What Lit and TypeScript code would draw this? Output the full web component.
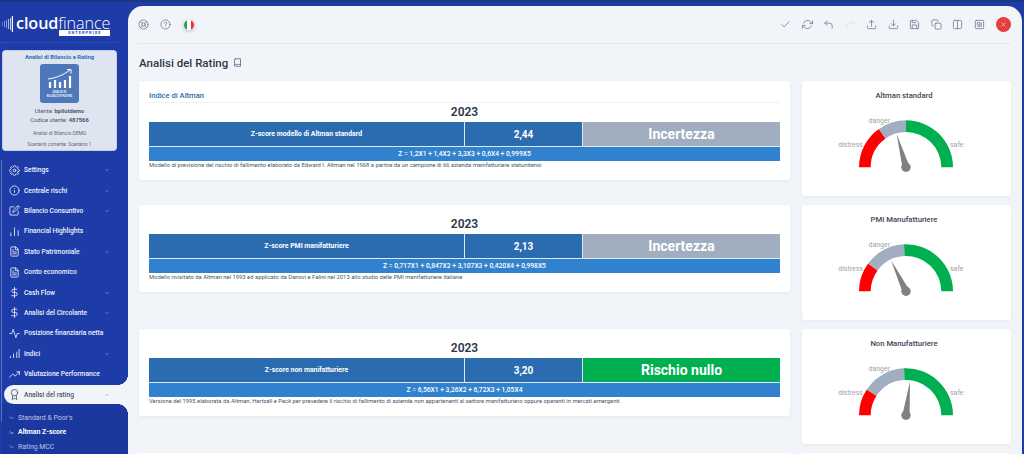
import { LitElement, html, css, svg } from "lit";
import { customElement } from "lit/decorators.js";

const ic = (body: any, cls = "ic") =>
  html`<svg class=${cls} viewBox="0 0 24 24" fill="none" stroke="currentColor" stroke-width="1.8" stroke-linecap="round" stroke-linejoin="round">${body}</svg>`;

const I: Record<string, any> = {
  settings: svg`<circle cx="12" cy="12" r="3"/><path d="M19.4 15a1.65 1.65 0 0 0 .33 1.82l.06.06a2 2 0 1 1-2.83 2.83l-.06-.06a1.65 1.65 0 0 0-2.82 1.17V21a2 2 0 1 1-4 0v-.09A1.65 1.65 0 0 0 7.2 19.7l-.06.06a2 2 0 1 1-2.83-2.83l.06-.06a1.65 1.65 0 0 0-1.17-2.82H3a2 2 0 1 1 0-4h.09A1.65 1.65 0 0 0 4.3 7.2l-.06-.06a2 2 0 1 1 2.83-2.83l.06.06A1.65 1.65 0 0 0 10 3.2V3a2 2 0 1 1 4 0v.09a1.65 1.65 0 0 0 2.8 1.17l.06-.06a2 2 0 1 1 2.83 2.83l-.06.06A1.65 1.65 0 0 0 20.8 10H21a2 2 0 1 1 0 4h-.09a1.65 1.65 0 0 0-1.51 1z"/>`,
  info: svg`<circle cx="12" cy="12" r="10"/><path d="M12 16v-4M12 8h.01"/>`,
  edit: svg`<path d="M11 4H4a2 2 0 0 0-2 2v14a2 2 0 0 0 2 2h14a2 2 0 0 0 2-2v-7"/><path d="M18.5 2.5a2.12 2.12 0 0 1 3 3L12 15l-4 1 1-4 9.5-9.5z"/>`,
  bars: svg`<path d="M4 21v-6M12 21V4M20 21v-11"/>`,
  file: svg`<path d="M14 2H6a2 2 0 0 0-2 2v16a2 2 0 0 0 2 2h12a2 2 0 0 0 2-2V8z"/><path d="M14 2v6h6M16 13H8M16 17H8M10 9H8"/>`,
  dollar: svg`<path d="M12 1v22M17 5H9.5a3.5 3.5 0 0 0 0 7h5a3.5 3.5 0 0 1 0 7H6"/>`,
  activity: svg`<path d="M22 12h-4l-3 9L9 3l-3 9H2"/>`,
  stats: svg`<path d="M3 21v-3M10 21v-8M17 21V9M22 21V3"/>`,
  trend: svg`<path d="M23 6l-9.5 9.5-5-5L1 18"/><path d="M17 6h6v6"/>`,
  award: svg`<circle cx="12" cy="8" r="7"/><path d="M8.2 14L7 23l5-3 5 3-1.2-9"/>`,
  down: svg`<path d="M6 9l6 6 6-6"/>`,
  up: svg`<path d="M18 15l-6-6-6 6"/>`,
  sub: svg`<path d="M5 5v8a2 2 0 0 0 2 2h12M15 11l4 4-4 4"/>`,
  buoy: svg`<circle cx="12" cy="12" r="10"/><circle cx="12" cy="12" r="4"/><path d="M4.9 4.9l4.3 4.3M14.8 14.8l4.3 4.3M14.8 9.2l4.3-4.3M4.9 19.1l4.3-4.3"/>`,
  help: svg`<circle cx="12" cy="12" r="10"/><path d="M9.1 9a3 3 0 0 1 5.8 1c0 2-3 3-3 3M12 17h.01"/>`,
  book: svg`<path d="M4 19.5A2.5 2.5 0 0 1 6.5 17H20"/><path d="M6.5 2H20v20H6.5A2.5 2.5 0 0 1 4 19.5v-15A2.5 2.5 0 0 1 6.5 2z"/>`,
  check: svg`<path d="M20 6L9 17l-5-5"/>`,
  refresh: svg`<path d="M23 4v6h-6M1 20v-6h6"/><path d="M3.5 9a9 9 0 0 1 14.9-3.4L23 10M1 14l4.6 4.4A9 9 0 0 0 20.5 15"/>`,
  undo: svg`<path d="M9 14L4 9l5-5"/><path d="M4 9h10a6 6 0 0 1 6 6v5"/>`,
  redo: svg`<path d="M15 14l5-5-5-5"/><path d="M20 9H10a6 6 0 0 0-6 6v5"/>`,
  upload: svg`<path d="M3 15v4a2 2 0 0 0 2 2h14a2 2 0 0 0 2-2v-4"/><path d="M17 8l-5-5-5 5M12 3v13"/>`,
  download: svg`<path d="M3 15v4a2 2 0 0 0 2 2h14a2 2 0 0 0 2-2v-4"/><path d="M7 10l5 5 5-5M12 15V3"/>`,
  save: svg`<path d="M19 21H5a2 2 0 0 1-2-2V5a2 2 0 0 1 2-2h11l5 5v11a2 2 0 0 1-2 2z"/><path d="M17 21v-8H7v8M7 3v5h8"/>`,
  copy: svg`<rect x="9" y="9" width="13" height="13" rx="2"/><path d="M5 15H4a2 2 0 0 1-2-2V4a2 2 0 0 1 2-2h9a2 2 0 0 1 2 2v1"/>`,
  columns: svg`<rect x="3" y="3" width="18" height="18" rx="3"/><path d="M12 3v18"/>`,
  layout: svg`<rect x="3" y="3" width="18" height="18" rx="2"/><path d="M8 8h5v5H8zM16 8v8H8"/>`,
  x: svg`<path d="M18 6L6 18M6 6l12 12"/>`,
};

const MENU = [
  ["settings", "Settings", true],
  ["info", "Centrale rischi", true],
  ["edit", "Bilancio Consuntivo", true],
  ["bars", "Financial Highlights", false],
  ["file", "Stato Patrimoniale", true],
  ["file", "Conto economico", false],
  ["dollar", "Cash Flow", true],
  ["dollar", "Analisi del Circolante", true],
  ["activity", "Posizione finanziaria netta", false],
  ["stats", "Indici", true],
  ["trend", "Valutazione Performance", false],
];

const RATINGS = [
  {
    head: true,
    label: "Z-score modello di Altman standard",
    value: "2,44",
    result: "Incertezza",
    ok: false,
    formula: "Z = 1,2X1 + 1,4X2 + 3,3X3 + 0,6X4 + 0,999X5",
    desc: "Modello di previsione del rischio di fallimento elaborato da Edward I. Altman nel 1968 a partire da un campione di 66 azienda manifatturiere statunitensi",
    gauge: { title: "Altman standard", red: 54.7, grey: 90, tx: -9.3, ty: -33 },
  },
  {
    head: false,
    label: "Z-score PMI manifatturiere",
    value: "2,13",
    result: "Incertezza",
    ok: false,
    formula: "Z = 0,717X1 + 0,847X2 + 3,107X3 + 0,420X4 + 0,998X5",
    desc: "Modello rivisitato da Altman nel 1993 ed applicato da Danovi e Falini nel 2013 allo studio delle PMI manifatturiere italiane",
    gauge: { title: "PMI Manufatturiere", red: 36.3, grey: 87.6, tx: -15, ty: -31 },
  },
  {
    head: false,
    label: "Z-score non manifatturiere",
    value: "3,20",
    result: "Rischio nullo",
    ok: true,
    formula: "Z = 6,56X1 + 3,26X2 + 6,72X3 + 1,05X4",
    desc: "Versione del 1995 elaborata da Altman, Hartzell e Peck per prevedere il rischio di fallimento di aziende non appartenenti al settore manifatturiero oppure operanti in mercati emergenti",
    gauge: { title: "Non Manufatturiere", red: 33.4, grey: 87.6, tx: 4, ty: -34 },
  },
];

const CX = 104;
const CY = 56.3;
const RO = 47;
const RI = 35.3;
function seg(a: number, b: number) {
  const p = (r: number, d: number) => {
    const t = (d * Math.PI) / 180;
    return `${(CX - r * Math.cos(t)).toFixed(2)} ${(CY - r * Math.sin(t)).toFixed(2)}`;
  };
  return `M${p(RO, a)} A${RO} ${RO} 0 0 1 ${p(RO, b)} L${p(RI, b)} A${RI} ${RI} 0 0 0 ${p(RI, a)} Z`;
}

function gauge(g: { red: number; grey: number; tx: number; ty: number }) {
  const len = Math.hypot(g.tx, g.ty);
  const nx = (-g.ty / len) * 3.6;
  const ny = (g.tx / len) * 3.6;
  return html`<svg class="gauge" viewBox="0 0 209 85" width="209" height="85">
    <path d=${seg(0, g.red)} fill="#ff0000"/>
    <path d=${seg(g.red, g.grey)} fill="#a0aec0"/>
    <path d=${seg(g.grey, 180)} fill="#00b050"/>
    <text x="61" y="35.6" text-anchor="end">distress</text>
    <text x="66.5" y="11.5">danger</text>
    <text x="148" y="35.6">safe</text>
    <path d="M${CX + g.tx} ${CY + g.ty} L${CX + nx} ${CY + ny} L${CX - nx} ${CY - ny} Z" fill="#808185"/>
    <circle cx=${CX} cy=${CY} r="4.7" fill="#808185"/>
  </svg>`;
}

@customElement("app-root")
export class AppRoot extends LitElement {
  static styles = css`
    :host {
      display: block;
      height: 100vh;
      overflow: hidden;
      font-family: Roboto, "Liberation Sans", sans-serif;
    }
    .page {
      display: flex;
      height: 100%;
      background: linear-gradient(#1c3585 0 2px, #1d3ca8 2px);
      color: #2d3748;
    }
    .ic { display: block; width: 11px; height: 11px; flex: none; }

    /* sidebar */
    .side { width: 128px; flex: none; display: flex; flex-direction: column; color: #fff; }
    .brand {
      height: 43px;
      flex: none;
      margin-right: 10px;
      border-bottom: 1px dotted rgba(255,255,255,.15);
      display: flex;
      align-items: flex-start;
      padding: 16px 0 0 2px;
      box-sizing: border-box;
      gap: 3px;
    }
    .wave { width: 11px; height: 16px; flex: none; }
    .brandtxt { display: flex; flex-direction: column; align-items: flex-end; }
    .word { font-family: "Open Sans", sans-serif; font-size: 16.2px; line-height: 14px; letter-spacing: -.1px; white-space: nowrap; }
    .word b { font-weight: 600; }
    .word span { font-weight: 300; }
    .ent {
      background: #fff;
      color: #2b50b8;
      font-size: 4px;
      font-weight: 700;
      line-height: 5.6px;
      width: 51px;
      text-align: center;
      letter-spacing: 1px;
    }
    .ucard {
      margin: 7px 11px 0 2px;
      height: 101px;
      box-sizing: border-box;
      flex: none;
      background: #dfe5f0;
      border: 1px dotted #a9b9dc;
      border-radius: 4px;
      color: #4a5568;
      display: flex;
      flex-direction: column;
      align-items: center;
      padding-top: 3px;
      font-size: 5.8px;
    }
    .ucard h4 { margin: 0; font-size: 5.8px; line-height: 7px; color: #2b6cb0; font-weight: 700; }
    .tile {
      width: 39px;
      height: 39px;
      margin-top: 3px;
      background: #4f78bb;
      border-radius: 3px;
      display: flex;
      flex-direction: column;
      align-items: center;
      color: #fff;
      flex: none;
    }
    .tile svg { width: 26px; height: 21px; margin-top: 4px; }
    .tile span { font-size: 2.8px; line-height: 3.6px; text-align: center; width: 26px; margin-top: 2px; font-weight: 500; }
    .u1 { margin-top: 4px; line-height: 9px; text-align: center; }
    .ucard b { font-weight: 700; color: #4a5568; }
    .u2 { margin-top: 5px; font-size: 4.9px; line-height: 6px; color: #5a6678; }
    .u3 { margin-top: 5px; font-size: 4.9px; line-height: 6px; color: #5a6678; }

    .menu {
      margin: 9px 0 0 1px;
      border-left: 1px solid rgba(255,255,255,.28);
      display: flex;
      flex-direction: column;
      height: 262px;
      flex: none;
    }
    .item {
      height: 20.4px;
      flex: none;
      display: flex;
      align-items: center;
      padding-left: 7px;
      font-size: 6.7px;
      font-weight: 500;
      color: #eef2fb;
      white-space: nowrap;
    }
    .item .label { margin-left: 4px; flex: 1; }
    .item .ch { width: 6px; height: 6px; margin-right: 18px; opacity: .7; }
    .item.on {
      position: relative;
      margin-left: 2px;
      padding-left: 5px;
      height: 18.6px;
      margin-top: 1px;
      background: #f1f5f9;
      color: #4a5568;
      border-radius: 10px 0 0 10px;
    }
    .item.on::before, .item.on::after {
      content: "";
      position: absolute;
      right: 0;
      width: 10px;
      height: 10px;
    }
    .item.on::before { top: -10px; background: radial-gradient(circle at 0 0, transparent 9.6px, #f1f5f9 10px); }
    .item.on::after { bottom: -10px; background: radial-gradient(circle at 0 100%, transparent 9.6px, #f1f5f9 10px); }
    .subs {
      background: #1b389f;
      padding-top: 6.4px;
      display: flex;
      flex-direction: column;
      font-size: 6.9px;
      color: #b9c6e6;
      height: 60px;
      box-sizing: border-box;
    }
    .sub { height: 14.5px; flex: none; display: flex; align-items: center; padding-left: 7px; gap: 4px; white-space: nowrap; }
    .sub svg { width: 5px; height: 5px; }
    .sub.on { color: #fff; font-weight: 700; }

    /* main */
    .panel {
      flex: 1;
      min-width: 0;
      margin: 6px 2px 0 0;
      background: #f1f5f9;
      border-radius: 15px 15px 0 0;
      padding: 0 11px 0 10px;
      overflow: hidden;
    }
    .bar {
      height: 37px;
      border-bottom: 1px solid #e2e8f0;
      display: flex;
      align-items: center;
      color: #718096;
    }
    .tools { display: flex; align-items: center; gap: 10.5px; }
    .flag {
      width: 10px;
      height: 10px;
      border-radius: 50%;
      overflow: hidden;
      display: flex;
      margin-left: 3px;
      box-shadow: 0 1px 4px rgba(0,0,0,.25);
      flex: none;
    }
    .flag i { flex: 1; }
    .g { background: #1fa94f; }
    .w { background: #fff; }
    .r { background: #ee2a35; }
    .spacer { flex: 1; }
    .off { color: #dde5ef; }
    .close {
      width: 15px;
      height: 15px;
      margin-left: 1px;
      border-radius: 50%;
      background: #e53e3e;
      color: #fff;
      display: flex;
      align-items: center;
      justify-content: center;
    }
    .close svg { width: 7px; height: 7px; }
    .title {
      height: 37px;
      display: flex;
      align-items: center;
      gap: 5px;
      margin-left: 1px;
      font-size: 11.5px;
      font-weight: 500;
      color: #2d3748;
    }
    .title svg { width: 9px; height: 9px; color: #4a5568; }
    .grid {
      display: grid;
      grid-template-columns: 651px 209px;
      column-gap: 12px;
      row-gap: 9px;
      grid-auto-rows: 115px;
      margin-left: 1px;
    }
    .card {
      background: #fff;
      border-radius: 3px;
      box-shadow: 0 1px 4px rgba(45,55,72,.06);
    }
    .rate { align-self: start; padding: 10px 10px 9.6px; }
    .rate h5 {
      margin: 0;
      font-size: 7.6px;
      line-height: 10px;
      font-weight: 500;
      color: #2b6cb0;
      border-bottom: 1px solid #edf2f7;
      padding-bottom: 1px;
    }
    .year { text-align: center; font-size: 12px; font-weight: 600; line-height: 19px; color: #2d3748; }
    .tbl {
      display: grid;
      grid-template-columns: 316px 118px 197px;
      color: #fff;
      row-gap: 1px;
      background: #e2e8f0;
    }
    .tbl > div { display: flex; align-items: center; justify-content: center; height: 24px; white-space: nowrap; }
    .c1 { background: #2b6cb0; font-size: 6.9px; font-weight: 700; border-right: 1px solid #e2e8f0; }
    .c2 { background: #2b6cb0; font-size: 10px; font-weight: 700; border-right: 1px solid #e2e8f0; }
    .c3 { font-size: 14px; font-weight: 700; }
    .grey { background: #a0aec0; }
    .green { background: #00b050; }
    .tbl > .f { grid-column: 1 / -1; background: #3182ce; height: 14px; font-size: 6.7px; font-weight: 500; }
    .desc { font-size: 5.85px; line-height: 9px; color: #4a5568; white-space: nowrap; }
    .gcard { display: flex; flex-direction: column; }
    .gcard h6 {
      margin: 0;
      height: 30px;
      box-sizing: border-box;
      padding: 10px 5px 0 0;
      text-align: center;
      font-size: 7.7px;
      line-height: 10px;
      font-weight: 500;
      color: #3d4656;
    }
    .gauge { display: block; }
    .gauge text { font-family: Roboto, sans-serif; font-size: 7px; fill: #a0a2a8; }
  `;

  render() {
    return html`<div class="page">
      <aside class="side">
        <div class="brand">
          <svg class="wave" viewBox="0 0 11 16" stroke="#fff" stroke-width=".9" fill="none">
            <path d="M.5 6v4" opacity=".35"/><path d="M2.5 5v6" opacity=".45"/><path d="M4.5 4v8" opacity=".55"/>
            <path d="M6.5 3v10" opacity=".7"/><path d="M8.5 2v12" opacity=".85"/><path d="M10.4 0v16" stroke-width="1.2"/>
          </svg>
          <div class="brandtxt">
            <div class="word"><b>cloud</b><span>finance</span></div>
            <div class="ent">ENTERPRISE</div>
          </div>
        </div>
        <div class="ucard">
          <h4>Analisi di Bilancio e Rating</h4>
          <div class="tile">
            <svg viewBox="0 0 26 21" fill="none" stroke="#fff">
              <path d="M1 11C8 10 15 8 23 2" stroke-width="1"/><path d="M20 1.5h4v4" stroke-width="1"/>
              <path d="M3 20v-6M8 20v-8M13 20v-6M18 20v-8M23 20V8" stroke-width="2.2"/>
            </svg>
            <span>ANALISI DI BILANCIO E RATING</span>
          </div>
          <div class="u1">Utente: <b>bpilotdemo</b><br />Codice utente: <b>487566</b></div>
          <div class="u2">Analisi di Bilancio DEMO</div>
          <div class="u3">Scenario corrente: Scenario 1</div>
        </div>
        <nav class="menu">
          ${MENU.map(
            ([i, t, c]) => html`<div class="item">
              ${ic(I[i as string])}<span class="label">${t}</span>${c ? ic(I.down, "ch") : ""}
            </div>`
          )}
          <div class="item on">${ic(I.award)}<span class="label">Analisi del rating</span>${ic(I.up, "ch")}</div>
          <div class="subs">
            <div class="sub">${ic(I.sub)}Standard &amp; Poor's</div>
            <div class="sub on">${ic(I.sub)}Altman Z-score</div>
            <div class="sub">${ic(I.sub)}Rating MCC</div>
          </div>
        </nav>
      </aside>
      <main class="panel">
        <header class="bar">
          <div class="tools">
            ${ic(I.buoy)}${ic(I.help)}
            <div class="flag"><i class="g"></i><i class="w"></i><i class="r"></i></div>
          </div>
          <div class="spacer"></div>
          <div class="tools">
            ${ic(I.check)}${ic(I.refresh)}${ic(I.undo)}${ic(I.redo, "ic off")}${ic(I.upload)}${ic(I.download)}${ic(I.save)}${ic(I.copy)}${ic(I.columns)}${ic(I.layout)}
            <div class="close">${ic(I.x)}</div>
          </div>
        </header>
        <div class="title">Analisi del Rating ${ic(I.book)}</div>
        <div class="grid">
          ${RATINGS.map(
            (r) => html`
              <section class="card rate">
                ${r.head ? html`<h5>Indice di Altman</h5>` : ""}
                <div class="year">2023</div>
                <div class="tbl">
                  <div class="c1">${r.label}</div>
                  <div class="c2">${r.value}</div>
                  <div class="c3 ${r.ok ? "green" : "grey"}">${r.result}</div>
                  <div class="f">${r.formula}</div>
                </div>
                <div class="desc">${r.desc}</div>
              </section>
              <section class="card gcard">
                <h6>${r.gauge.title}</h6>
                ${gauge(r.gauge)}
              </section>
            `
          )}
          <section class="card"></section>
          <section class="card"></section>
        </div>
      </main>
    </div>`;
  }
}
